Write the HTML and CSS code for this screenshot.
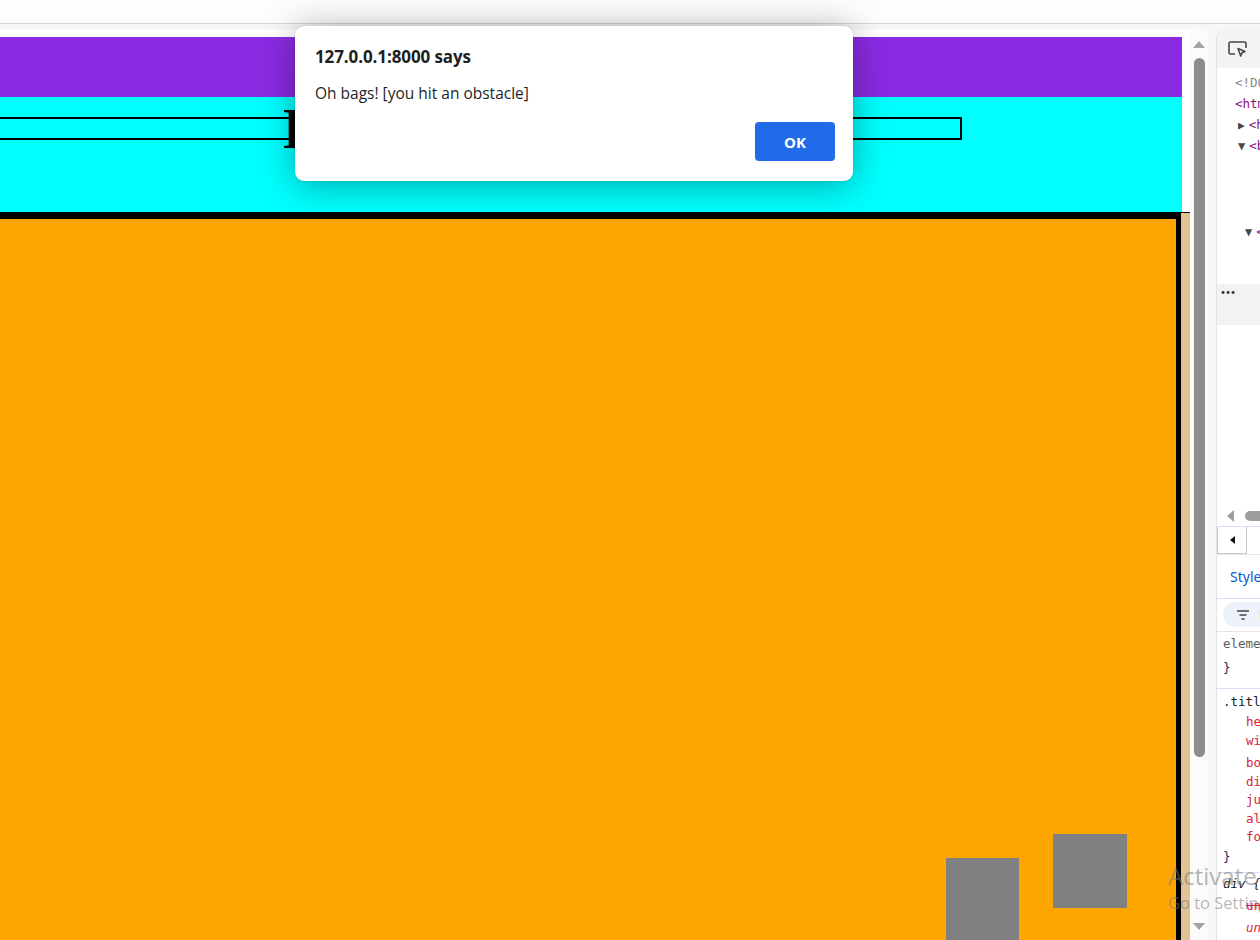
FILE: index.html
```html
<!DOCTYPE html>
<html lang="en">
<head>
<meta charset="utf-8">
<title>Bag Game</title>
<link rel="stylesheet" href="styles.css">
</head>
<body>
<div class="chrome-top"></div>
<div class="frame">
  <div class="viewport">
    <div class="page">
      <div class="header-purple"></div>
      <div class="header-cyan">
        <div class="title"><span class="title-text">Dodge</span></div>
      </div>
      <div class="arena-wrap">
        <div class="arena">
          <div class="obstacle ob1"></div>
          <div class="obstacle ob2"></div>
        </div>
        <div class="arena-side"></div>
      </div>
    </div>
    <div class="vscroll">
      <div class="arrow-up"></div>
      <div class="thumb"></div>
      <div class="arrow-down"></div>
    </div>
  </div>
  <div class="devtools">
    <div class="dt-toolbar">
      <svg class="inspect" width="22" height="20" viewBox="0 0 22 20" fill="none" stroke="#474747" stroke-width="1.6">
        <path d="M8 15H3.5a1.5 1.5 0 0 1-1.5-1.5V4.5A1.5 1.5 0 0 1 3.5 3h14A1.5 1.5 0 0 1 19 4.5V9"/>
        <path d="M11 9.5l7 3-3 1.2-1.3 3.3z" stroke-linejoin="round"/>
      </svg>
    </div>
    <div class="dt-tree">
      <div class="row doc">&lt;!DOCTYPE html&gt;</div>
      <div class="row tag">&lt;html lang="en"&gt;</div>
      <div class="row ind"><span class="tri">&#9654;</span><span class="tag">&lt;head&gt;</span></div>
      <div class="row ind"><span class="tri down">&#9660;</span><span class="tag">&lt;body&gt;</span></div>
      <div class="spacer s65"></div>
      <div class="row ind2"><span class="tri down">&#9660;</span><span class="tag">&lt;div&gt;</span></div>
      <div class="spacer s42"></div>
      <div class="sel-band"><span class="dots">&bull;&bull;&bull;</span></div>
      <div class="spacer s180"></div>
      <div class="hscroll"><span class="hs-arrow"></span><span class="hs-thumb"></span></div>
      <div class="crumbs"><span class="crumb-box"><span class="crumb-tri"></span></span></div>
      <div class="tabs"><span class="tab">Styles</span></div>
      <div class="filter"><span class="pill"><svg width="14" height="12" viewBox="0 0 14 12" stroke="#444" stroke-width="1.4"><path d="M1 2h12M3.5 6h7M5.5 10h3"/></svg><span class="pill-text">Filter</span></span></div>
      <div class="rule">
        <div class="sel gray">element.style {</div>
        <div class="sel">}</div>
      </div>
      <div class="rule rule-title">
        <div class="sel black">.title {</div>
        <div class="prop">height: 20px;</div>
        <div class="prop">width: 1000px;</div>
        <div class="prop gap">border: 2px solid black;</div>
        <div class="prop">display: flex;</div>
        <div class="prop">justify-content: center;</div>
        <div class="prop">align-items: center;</div>
        <div class="prop">font-size: 56px;</div>
        <div class="sel">}</div>
      </div>
      <div class="rule last">
        <div class="sel ital">div {</div>
        <div class="prop strike">unicode-bidi: isolate;</div>
        <div class="prop ital">unicode-bidi: isolate;</div>
        <div class="sel">}</div>
      </div>
    </div>
  </div>
</div>

<div class="dialog">
  <div class="dlg-title">127.0.0.1:8000 says</div>
  <div class="dlg-msg">Oh bags! [you hit an obstacle]</div>
  <div class="dlg-actions"><button class="dlg-ok">OK</button></div>
</div>

<div class="watermark">
  <div class="wm1">Activate Windows</div>
  <div class="wm2">Go to Settings to activate Windows.</div>
</div>
</body>
</html>
```

FILE: styles.css
```css
* { box-sizing: border-box; }
html, body { margin: 0; padding: 0; }
body {
  width: 1260px;
  height: 940px;
  overflow: hidden;
  background: #f7f7f7;
  font-family: "Noto Sans", "Open Sans", sans-serif;
  position: relative;
}
.chrome-top {
  height: 24px;
  background: #fdfdfd;
  border-bottom: 1px solid #d6d6d6;
}
.frame {
  display: flex;
  padding-top: 5px;
  height: 916px;
}
.viewport {
  width: 1208px;
  display: flex;
  background: #fff;
  border-top-right-radius: 9px;
  overflow: hidden;
}
.page {
  width: 1190px;
  padding-top: 8px;
  display: flex;
  flex-direction: column;
  background: #fff;
}
.header-purple {
  width: 1182px;
  height: 60px;
  background: #8a2be2;
  flex: none;
}
.header-cyan {
  width: 1182px;
  height: 115px;
  background: #00ffff;
  padding-top: 20px;
  flex: none;
}
.title {
  margin-left: -40px;
  width: 1002px;
  height: 23px;
  border: 2px solid #000;
  display: flex;
  justify-content: flex-start;
  align-items: center;
  padding-left: 321px;
  font-family: "Liberation Serif", serif;
  font-weight: bold;
  font-size: 56px;
  white-space: nowrap;
}
.arena-wrap {
  flex: 1;
  display: flex;
  border-top: 1px solid #000;
  background: #e0c494;
}
.arena {
  width: 1181px;
  background: #ffa500;
  border-top: 6px solid #000;
  border-right: 5px solid #000;
  position: relative;
  overflow: hidden;
}
.arena-side { flex: 1; }
.obstacle {
  position: absolute;
  background: #808080;
  filter: blur(0.5px);
}
.ob1 { left: 946px; top: 639px; width: 73px; height: 90px; }
.ob2 { left: 1053px; top: 615px; width: 74px; height: 74px; }

.vscroll {
  width: 18px;
  background: #fbfbfb;
  position: relative;
}
.arrow-up {
  position: absolute;
  left: 3px; top: 12px;
  width: 0; height: 0;
  border-left: 6px solid transparent;
  border-right: 6px solid transparent;
  border-bottom: 7px solid #a3a3a3;
}
.thumb {
  position: absolute;
  left: 4px; top: 29px;
  width: 11px; height: 699px;
  background: #8d8d8d;
  border-radius: 6px;
}
.arrow-down {
  position: absolute;
  left: 3px; top: 894px;
  width: 0; height: 0;
  border-left: 6px solid transparent;
  border-right: 6px solid transparent;
  border-top: 7px solid #a3a3a3;
}

.devtools {
  margin-left: 8px;
  flex: 1;
  background: #fff;
  border-top-left-radius: 9px;
  border-left: 1px solid #e3e3e3;
  overflow: hidden;
  font-family: "DejaVu Sans Mono", monospace;
  font-size: 12.5px;
}
.dt-toolbar {
  height: 39px;
  background: #f3f3f3;
  padding: 10px 0 0 10px;
}
.dt-tree { width: 300px; padding-top: 4px; }
.row { height: 21px; line-height: 21px; white-space: nowrap; padding-left: 18px; }
.doc { color: #8b8b8b; }
.tag { color: #881280; }
.ind { padding-left: 21px; }
.ind2 { padding-left: 28px; }
.tri { color: #474747; font-size: 11px; margin-right: 4px; }
.tri.down { font-size: 12px; }
.spacer.s65 { height: 65px; }
.spacer.s42 { height: 42px; }
.spacer.s180 { height: 180px; }
.sel-band {
  height: 41px;
  background: #f2f2f2;
  padding-left: 3px;
  line-height: 18px;
  font-size: 10px;
  color: #333;
  letter-spacing: -1px;
}
.hscroll {
  height: 22px;
  display: flex;
  align-items: center;
  border-bottom: 1px solid #d7e1f4;
  padding-left: 10px;
}
.hs-arrow {
  width: 0; height: 0;
  border-top: 6px solid transparent;
  border-bottom: 6px solid transparent;
  border-right: 7px solid #9e9e9e;
}
.hs-thumb {
  margin-left: 11px;
  width: 60px; height: 10px;
  background: #9e9e9e;
  border-radius: 5px;
}
.crumbs {
  height: 28px;
  border-bottom: 1px solid #e6e6e6;
}
.crumb-box {
  display: flex;
  align-items: center;
  justify-content: center;
  width: 30px;
  height: 27px;
  border: 1px solid #c8c8c8;
  border-top: none;
}
.crumb-tri {
  width: 0; height: 0;
  border-top: 4px solid transparent;
  border-bottom: 4px solid transparent;
  border-right: 5px solid #111;
}
.tabs {
  height: 44px;
  border-bottom: 1px solid #d7e1f4;
  padding: 12px 0 0 13px;
}
.tab {
  font-family: "Noto Sans", sans-serif;
  font-size: 14px;
  color: #0b57d0;
}
.filter {
  height: 33px;
  border-bottom: 1px solid #e3e3e3;
  padding: 3px 0 0 6px;
}
.pill {
  display: inline-flex;
  align-items: center;
  height: 25px;
  padding-left: 13px;
  width: 200px;
  background: #edf2fa;
  border-radius: 13px;
}
.pill-text { margin-left: 9px; color: #e8a35a; font-family: "Noto Sans", sans-serif; font-size: 12px; }
.rule {
  border-bottom: 1px solid #d7e1f4;
  padding: 2px 0 6px 6px;
  white-space: nowrap;
}
.rule.rule-title { padding-top: 3px; padding-bottom: 1px; }
.rule.last { border-bottom: none; padding-top: 0; }
.sel { height: 24px; line-height: 20px; color: #1f1f5c; }
.sel.gray { color: #5c5c5c; }
.sel.black { color: #222; height: 21px; }
.ital { font-style: italic; color: #222; }
.prop { height: 18.5px; line-height: 18.5px; padding-left: 23px; color: #d6243e; }
.prop.gap { margin-top: 4px; }
.rule.last .sel { height: 22px; line-height: 22px; }
.rule.last .prop { height: 22px; line-height: 22px; }
.prop.strike { text-decoration: line-through; }
.prop.ital { color: #d6243e; }

.dialog {
  position: absolute;
  left: 295px;
  top: 26px;
  width: 558px;
  height: 155px;
  background: #fff;
  border-radius: 9px;
  box-shadow: 0 4px 36px rgba(0, 0, 0, 0.35), 0 0 2px rgba(0,0,0,0.15);
  padding: 20px 18px 0 20px;
  font-family: "Open Sans", "Noto Sans", sans-serif;
  color: #1f1f1f;
}
.dlg-title {
  font-size: 17px;
  font-weight: 700;
  line-height: 22px;
  letter-spacing: -0.1px;
}
.dlg-msg {
  margin-top: 14px;
  font-size: 15.5px;
  line-height: 22px;
}
.dlg-actions {
  margin-top: 18px;
  display: flex;
  justify-content: flex-end;
}
.dlg-ok {
  width: 80px;
  height: 39px;
  border: none;
  border-radius: 4px;
  background: #216be8;
  color: #fff;
  font-family: "Open Sans", "Noto Sans", sans-serif;
  font-weight: 700;
  font-size: 15px;
}
.watermark {
  position: absolute;
  left: 1168px;
  top: 860px;
  color: rgba(120, 120, 120, 0.55);
  font-family: "Open Sans", sans-serif;
  white-space: nowrap;
}
.wm1 { font-size: 24px; line-height: 32px; }
.wm2 { font-size: 16.5px; line-height: 22px; margin-top: 0; }
```
